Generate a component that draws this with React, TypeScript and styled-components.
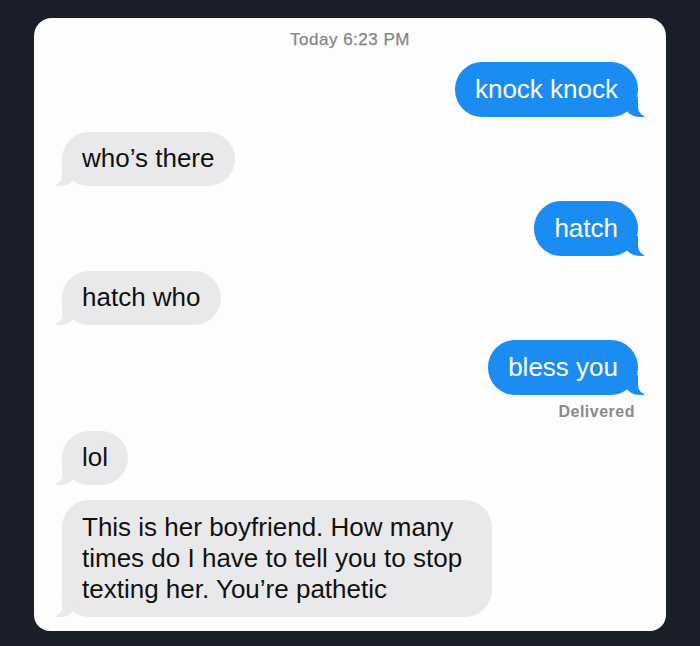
import React from "react";
import styled, { createGlobalStyle, css } from "styled-components";

const GlobalStyle = createGlobalStyle`
  html, body {
    margin: 0;
    padding: 0;
    background: #1a1e29;
  }
  body {
    font-family: "Liberation Sans", Arial, sans-serif;
    -webkit-font-smoothing: antialiased;
  }
`;

const Page = styled.div`
  width: 700px;
  height: 646px;
  background: #1a1e29;
  padding: 18px 34px 15px;
  box-sizing: border-box;
  display: flex;
`;

const Card = styled.div`
  flex: 1;
  background: #fdfdfd;
  border-radius: 18px 18px 16px 16px;
  padding: 12px 28px 15px;
  display: flex;
  flex-direction: column;
  gap: 15px;
  overflow: hidden;
`;

const Timestamp = styled.div`
  align-self: center;
  font-size: 17px;
  line-height: 20px;
  letter-spacing: 0.5px;
  color: #848488;
  margin-bottom: -3px;
  -webkit-text-stroke: 0.25px #848488;
`;

const Group = styled.div<{ $sent?: boolean }>`
  display: flex;
  flex-direction: column;
  align-items: ${(p) => (p.$sent ? "flex-end" : "flex-start")};
  gap: 10px;
`;

const BLUE = "#1b8cf2";
const GRAY = "#e9e9eb";
const CARD = "#fdfdfd";

const Bubble = styled.div<{ $sent?: boolean }>`
  position: relative;
  align-self: ${(p) => (p.$sent ? "flex-end" : "flex-start")};
  max-width: 390px;
  padding: 11.75px 20px;
  border-radius: 27px;
  font-size: 26px;
  line-height: 31px;
  background: ${(p) => (p.$sent ? BLUE : GRAY)};
  color: ${(p) => (p.$sent ? "#ffffff" : "#111111")};

  &::before,
  &::after {
    content: "";
    position: absolute;
    bottom: 0;
    height: 20px;
  }

  ${(p) =>
    p.$sent
      ? css`
          &::before {
            right: -6px;
            width: 20px;
            background: ${BLUE};
            border-bottom-left-radius: 16px 14px;
          }
          &::after {
            right: -26px;
            width: 26px;
            background: ${CARD};
            border-bottom-left-radius: 10px;
          }
        `
      : css`
          &::before {
            left: -6px;
            width: 20px;
            background: ${GRAY};
            border-bottom-right-radius: 16px 14px;
          }
          &::after {
            left: -26px;
            width: 26px;
            background: ${CARD};
            border-bottom-right-radius: 10px;
          }
        `}
`;

const Status = styled.div`
  font-size: 16px;
  line-height: 13px;
  font-weight: 700;
  letter-spacing: 0.5px;
  color: #8a8a8e;
  margin-right: 3px;
  margin-bottom: -2px;
`;

export default function App() {
  return (
    <>
      <GlobalStyle />
      <Page>
        <Card>
          <Timestamp>Today 6:23 PM</Timestamp>
          <Bubble $sent>knock knock</Bubble>
          <Bubble>who’s there</Bubble>
          <Bubble $sent>hatch</Bubble>
          <Bubble>hatch who</Bubble>
          <Group $sent>
            <Bubble $sent>bless you</Bubble>
            <Status>Delivered</Status>
          </Group>
          <Bubble>lol</Bubble>
          <Bubble>
            This is her boyfriend. How many times do I have to tell you to stop
            texting her. You’re pathetic
          </Bubble>
        </Card>
      </Page>
    </>
  );
}
